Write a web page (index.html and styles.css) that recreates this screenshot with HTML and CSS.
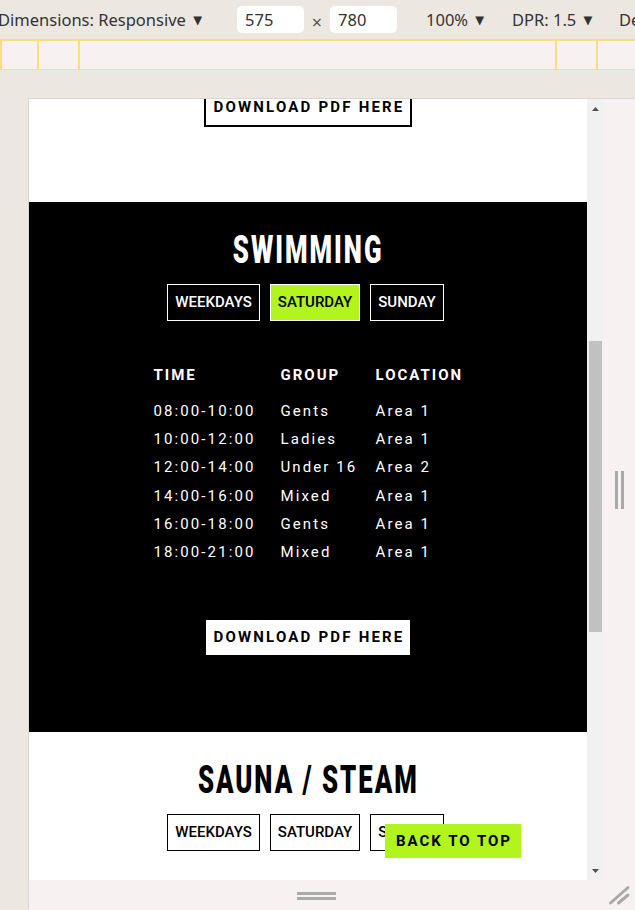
FILE: index.html
```html
<!DOCTYPE html>
<html lang="en">
<head>
<meta charset="utf-8">
<title>Swimming timetable</title>
<link rel="stylesheet" href="styles.css">
</head>
<body>
<div class="toolbar">
  <span class="slot dim">Dimensions: Responsive <span class="caret">▼</span></span>
  <span class="field">575</span>
  <span class="slot times">×</span>
  <span class="field">780</span>
  <span class="slot zoom">100% <span class="caret">▼</span></span>
  <span class="slot dpr">DPR: 1.5 <span class="caret">▼</span></span>
  <span class="slot more">De</span>
</div>
<div class="ruler">
  <div class="seg seg-a"></div>
  <div class="seg seg-b"></div>
  <div class="seg seg-c"></div>
  <div class="seg seg-b"></div>
  <div class="seg seg-e"></div>
</div>
<div class="stage">
  <div class="device">
    <div class="viewport">
      <div class="page">
        <section class="sec light first">
          <div class="cta"><a class="pdf">DOWNLOAD PDF HERE</a></div>
        </section>
        <section class="sec dark">
          <h2 class="title"><span>SWIMMING</span></h2>
          <div class="tabs">
            <span class="tab">WEEKDAYS</span>
            <span class="tab active">SATURDAY</span>
            <span class="tab">SUNDAY</span>
          </div>
          <div class="schedule">
            <div class="th">TIME</div><div class="th">GROUP</div><div class="th">LOCATION</div>
            <div class="td">08:00-10:00</div><div class="td">Gents</div><div class="td">Area 1</div>
            <div class="td">10:00-12:00</div><div class="td">Ladies</div><div class="td">Area 1</div>
            <div class="td">12:00-14:00</div><div class="td">Under 16</div><div class="td">Area 2</div>
            <div class="td">14:00-16:00</div><div class="td">Mixed</div><div class="td">Area 1</div>
            <div class="td">16:00-18:00</div><div class="td">Gents</div><div class="td">Area 1</div>
            <div class="td">18:00-21:00</div><div class="td">Mixed</div><div class="td">Area 1</div>
          </div>
          <div class="cta cta-dark"><a class="pdf">DOWNLOAD PDF HERE</a></div>
        </section>
        <section class="sec light sauna">
          <h2 class="title"><span>SAUNA / STEAM</span></h2>
          <div class="tabs">
            <span class="tab">WEEKDAYS</span>
            <span class="tab">SATURDAY</span>
            <span class="tab">SUNDAY</span>
          </div>
        </section>
      </div>
      <a class="back-top">BACK TO TOP</a>
    </div>
    <div class="scrollbar">
      <div class="arrow arrow-up"><svg width="7" height="4" viewBox="0 0 7 4"><path d="M0 4 L3.5 0 L7 4 Z" fill="#505050"/></svg></div>
      <div class="track"><div class="thumb"></div></div>
      <div class="arrow arrow-down"><svg width="7" height="4" viewBox="0 0 7 4"><path d="M0 0 L7 0 L3.5 4 Z" fill="#505050"/></svg></div>
    </div>
    <div class="side-handle"><i></i><i></i></div>
    <div class="bottom-handle"><i></i><i></i></div>
    <div class="corner"><svg width="31" height="30" viewBox="0 0 31 30"><path d="M6.5 23 L24 7.5 M14.5 23 L24 15" stroke="#a9a9a9" stroke-width="3" stroke-linecap="round" fill="none"/></svg></div>
  </div>
</div>
</body>
</html>
```
FILE: styles.css
```css
html, body {
  margin: 0;
  padding: 0;
}
body {
  width: 635px;
  height: 910px;
  overflow: hidden;
  background: #ede7e1;
  font-family: Roboto, "Liberation Sans", sans-serif;
}

/* devtools toolbar */
.toolbar {
  height: 39px;
  display: flex;
  align-items: center;
  font-family: "Noto Sans", "Open Sans", sans-serif;
  font-size: 16.5px;
  color: #333;
  white-space: nowrap;
  overflow: hidden;
}
.slot { display: block; flex: none; }
.dim { width: 239px; margin-left: -2px; }
.times { width: 26px; text-align: center; color: #555; font-size: 18px; padding-top: 4px; }
.zoom { width: 86px; margin-left: 29px; }
.dpr { width: 107px; }
.more { flex: none; }
.caret {
  font-family: "DejaVu Sans", sans-serif;
  font-size: 11.5px;
  margin-left: 3px;
  position: relative;
  top: -2px;
}
.field {
  flex: none;
  width: 67px;
  height: 27px;
  box-sizing: border-box;
  background: #fff;
  border-radius: 5px;
  padding-left: 8px;
  line-height: 27px;
}

.ruler {
  height: 31px;
  box-sizing: border-box;
  border-top: 2px solid #f8de7c;
  border-bottom: 1px solid #f8de7c;
  background: #f7f2f1;
  display: flex;
}
.seg { box-sizing: border-box; border-left: 2px solid #f8de7c; flex: none; }
.seg-a { width: 37px; }
.seg-b { width: 41px; }
.seg-c { width: 477px; }
.seg-e { flex: 1; }

/* emulated device */
.stage { padding: 29px 0 0 29px; }
.device {
  display: grid;
  grid-template-columns: 558px 17px 31px;
  grid-template-rows: 781px 30px;
  background: #f7f2f1;
  box-shadow: -1px -1px 0 #dcd6d0;
}
.viewport {
  position: relative;
  overflow: hidden;
  background: #fff;
}
.page { margin-top: -11px; }

.sec { text-align: center; }
.light { background: #fff; color: #000; }
.first { padding-bottom: 75px; }
.dark { background: #000; color: #fff; padding: 28px 0 75px; }
.sauna { padding-top: 28px; }

.title {
  margin: 0;
  font-family: Roboto, sans-serif;
  font-weight: 900;
  font-size: 39px;
  line-height: 40px;
}
.title span {
  display: inline-block;
  letter-spacing: 3px;
  transform: scaleX(0.66);
}

.tabs {
  margin-top: 14px;
  display: flex;
  justify-content: center;
  gap: 10px;
  padding-right: 5px;
}
.tab {
  box-sizing: border-box;
  height: 37px;
  line-height: 35px;
  padding: 0 7px;
  font-size: 15px;
  font-weight: 500;
  border: 1px solid currentColor;
}
.dark .tab { border-color: #fff; }
.tab.active { background: #b1f41e; color: #000; border-color: #fff; }
.light .tab { border-color: #000; }

.schedule {
  margin-top: 40px;
  display: grid;
  grid-template-columns: 127px 95px 87px;
  justify-content: center;
  text-align: left;
  font-size: 15px;
}
.th {
  font-weight: 700;
  letter-spacing: 2px;
  line-height: 28px;
  padding-bottom: 8px;
}
.td {
  letter-spacing: 2.1px;
  line-height: 28.2px;
  white-space: nowrap;
}

.cta { display: flex; justify-content: center; }
.cta-dark { margin-top: 52px; }
.pdf {
  display: block;
  border: 2px solid #000;
  background: #fff;
  color: #000;
  font-weight: 700;
  font-size: 15px;
  letter-spacing: 2.2px;
  line-height: 35px;
  padding: 0 5px 0 7px;
  white-space: nowrap;
}

.back-top {
  position: absolute;
  right: 66px;
  bottom: 22px;
  height: 34px;
  line-height: 34px;
  padding: 0 9px 0 11px;
  background: #b1f41e;
  color: #000;
  font-weight: 700;
  font-size: 15px;
  letter-spacing: 2px;
  white-space: nowrap;
}

/* scrollbar */
.scrollbar {
  background: #f1f1f1;
  display: flex;
  flex-direction: column;
}
.arrow {
  height: 17px;
  flex: none;
  display: flex;
  justify-content: center;
  align-items: center;
}
.arrow svg { display: block; }
.arrow-up { padding-top: 3px; box-sizing: border-box; }
.arrow-down { padding-bottom: 2px; box-sizing: border-box; }
.track { flex: 1; padding: 0 2px; }
.thumb {
  margin-top: 225px;
  height: 291px;
  background: #c1c1c1;
}

.side-handle {
  display: flex;
  justify-content: center;
  align-items: center;
  gap: 3px;
}
.side-handle i { display: block; width: 3px; height: 38px; background: #a9a9a9; }
.bottom-handle {
  grid-column: 1 / 3;
  display: flex;
  flex-direction: column;
  justify-content: center;
  align-items: center;
  gap: 2px;
  padding-top: 2px;
  box-sizing: border-box;
}
.bottom-handle i { display: block; width: 39px; height: 3px; background: #a9a9a9; }
.corner svg { display: block; }
```
